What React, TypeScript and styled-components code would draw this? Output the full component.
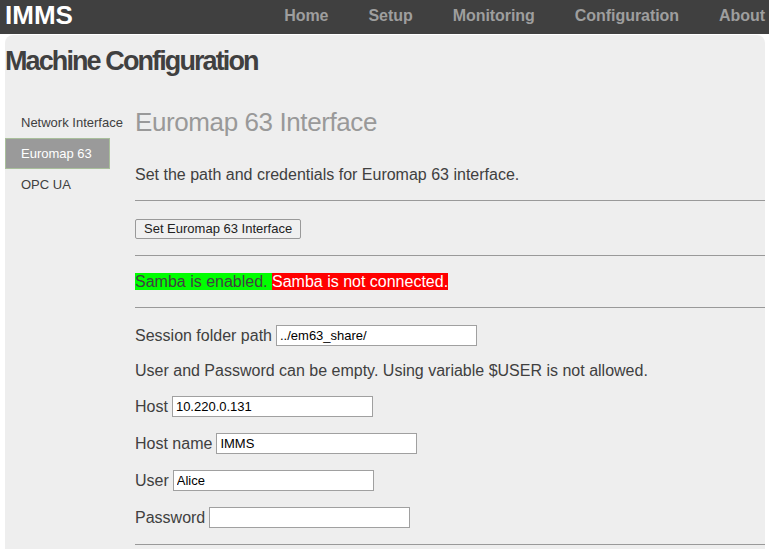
import styled, { createGlobalStyle } from "styled-components";

const GlobalStyle = createGlobalStyle`
    html, body {
        margin: 0;
        padding: 0;
        background: #fff;
        font-family: "Liberation Sans", Arial, sans-serif;
        color: #404040;
    }
`;

const Header = styled.div`
    display: flex;
    height: 34px;
    background: #404040;
    padding-left: 5px;
    padding-right: 4px;
    overflow: hidden;
`;
const Brand = styled.div`
    color: #fff;
    font-size: 26px;
    font-weight: 700;
    line-height: 30px;
    flex: 1;
`;
const Nav = styled.ul`
    display: flex;
    gap: 40px;
    margin: 0;
    padding: 0;
    list-style: none;
`;
const NavItem = styled.li`
    color: #9e9e9e;
    font-size: 16px;
    font-weight: 700;
    line-height: 20px;
    padding-top: 6px;
    letter-spacing: -0.05px;
`;

const Panel = styled.div`
    margin: 1px 4px 0 5px;
    background: #eeeeee;
    border-radius: 8px 8px 0 0;
    padding-top: 11px;
    min-height: 520px;
`;
const PageTitle = styled.h1`
    margin: 0;
    font-size: 27px;
    line-height: 31px;
    font-weight: 700;
    letter-spacing: -1.9px;
    color: #404040;
`;

const Body = styled.div`
    display: flex;
    margin-top: 30px;
`;
const Sidebar = styled.ul`
    width: 130px;
    flex-shrink: 0;
    margin: 0;
    padding: 0;
    list-style: none;
`;
const SideItem = styled.li<{ $active?: boolean }>`
    width: 105px;
    height: 31px;
    box-sizing: border-box;
    padding-left: 15px;
    font-size: 13px;
    line-height: 29px;
    white-space: nowrap;
    color: ${(p) => (p.$active ? "#fff" : "#404040")};
    background: ${(p) => (p.$active ? "#9a9a9a" : "transparent")};
    border: 1px solid ${(p) => (p.$active ? "#a9bf9b" : "transparent")};
`;

const Content = styled.div`
    flex: 1;
`;
const SectionTitle = styled.h2`
    margin: 0;
    font-size: 26px;
    line-height: 30px;
    font-weight: 400;
    letter-spacing: -0.4px;
    color: #999;
`;
const Text = styled.p`
    margin: 0;
    font-size: 16px;
    line-height: 18px;
`;
const Intro = styled(Text)`
    margin-top: 29px;
    margin-bottom: 16px;
`;
const Rule = styled.hr`
    margin: 0;
    border: none;
    border-top: 1px solid #999;
`;
const Section = styled.div<{ $top?: number }>`
    display: flex;
    flex-direction: column;
    align-items: flex-start;
    gap: 16px;
    padding: ${(p) => p.$top ?? 17}px 0 16px;
`;
const Button = styled.button`
    height: 20px;
    padding: 0 8px;
    font-family: "Liberation Sans", Arial, sans-serif;
    font-size: 13px;
    line-height: 16px;
    color: #222;
    background: #f0f0f0;
    border: 1px solid #999;
    border-radius: 2px;
`;
const Status = styled.span<{ $ok: boolean }>`
    background: ${(p) => (p.$ok ? "#00ff00" : "#ff0000")};
    color: ${(p) => (p.$ok ? "#404040" : "#fff")};
`;
const Row = styled.label`
    display: flex;
    align-items: center;
    gap: 4px;
    font-size: 16px;
    line-height: 21px;
`;
const Field = styled.input`
    width: 201px;
    height: 21px;
    box-sizing: border-box;
    padding: 1px 3px;
    font-family: "Liberation Sans", Arial, sans-serif;
    font-size: 13px;
    color: #000;
    background: #fff;
    border: 1px solid #a0a0a0;
    border-radius: 0;
`;

const navItems = ["Home", "Setup", "Monitoring", "Configuration", "About"];
const sideItems = ["Network Interface", "Euromap 63", "OPC UA"];

const fields = [
    { label: "Host", value: "10.220.0.131" },
    { label: "Host name", value: "IMMS" },
    { label: "User", value: "Alice" },
    { label: "Password", value: "", type: "password" },
];

export default function App() {
    return (
        <>
            <GlobalStyle />
            <Header>
                <Brand>IMMS</Brand>
                <Nav>
                    {navItems.map((item) => (
                        <NavItem key={item}>{item}</NavItem>
                    ))}
                </Nav>
            </Header>
            <Panel>
                <PageTitle>Machine Configuration</PageTitle>
                <Body>
                    <Sidebar>
                        {sideItems.map((item) => (
                            <SideItem key={item} $active={item === "Euromap 63"}>
                                {item}
                            </SideItem>
                        ))}
                    </Sidebar>
                    <Content>
                        <SectionTitle>Euromap 63 Interface</SectionTitle>
                        <Intro>
                            Set the path and credentials for Euromap 63 interface.
                        </Intro>
                        <Rule />
                        <Section $top={18}>
                            <Button>Set Euromap 63 Interface</Button>
                        </Section>
                        <Rule />
                        <Section>
                            <Text>
                                <Status $ok>Samba is enabled. </Status>
                                <Status $ok={false}>Samba is not connected.</Status>
                            </Text>
                        </Section>
                        <Rule />
                        <Section>
                            <Row>
                                Session folder path
                                <Field defaultValue="../em63_share/" />
                            </Row>
                            <Text>
                                User and Password can be empty. Using variable $USER is not
                                allowed.
                            </Text>
                            {fields.map((f) => (
                                <Row key={f.label}>
                                    {f.label}
                                    <Field type={f.type ?? "text"} defaultValue={f.value} />
                                </Row>
                            ))}
                        </Section>
                        <Rule />
                    </Content>
                </Body>
            </Panel>
        </>
    );
}
